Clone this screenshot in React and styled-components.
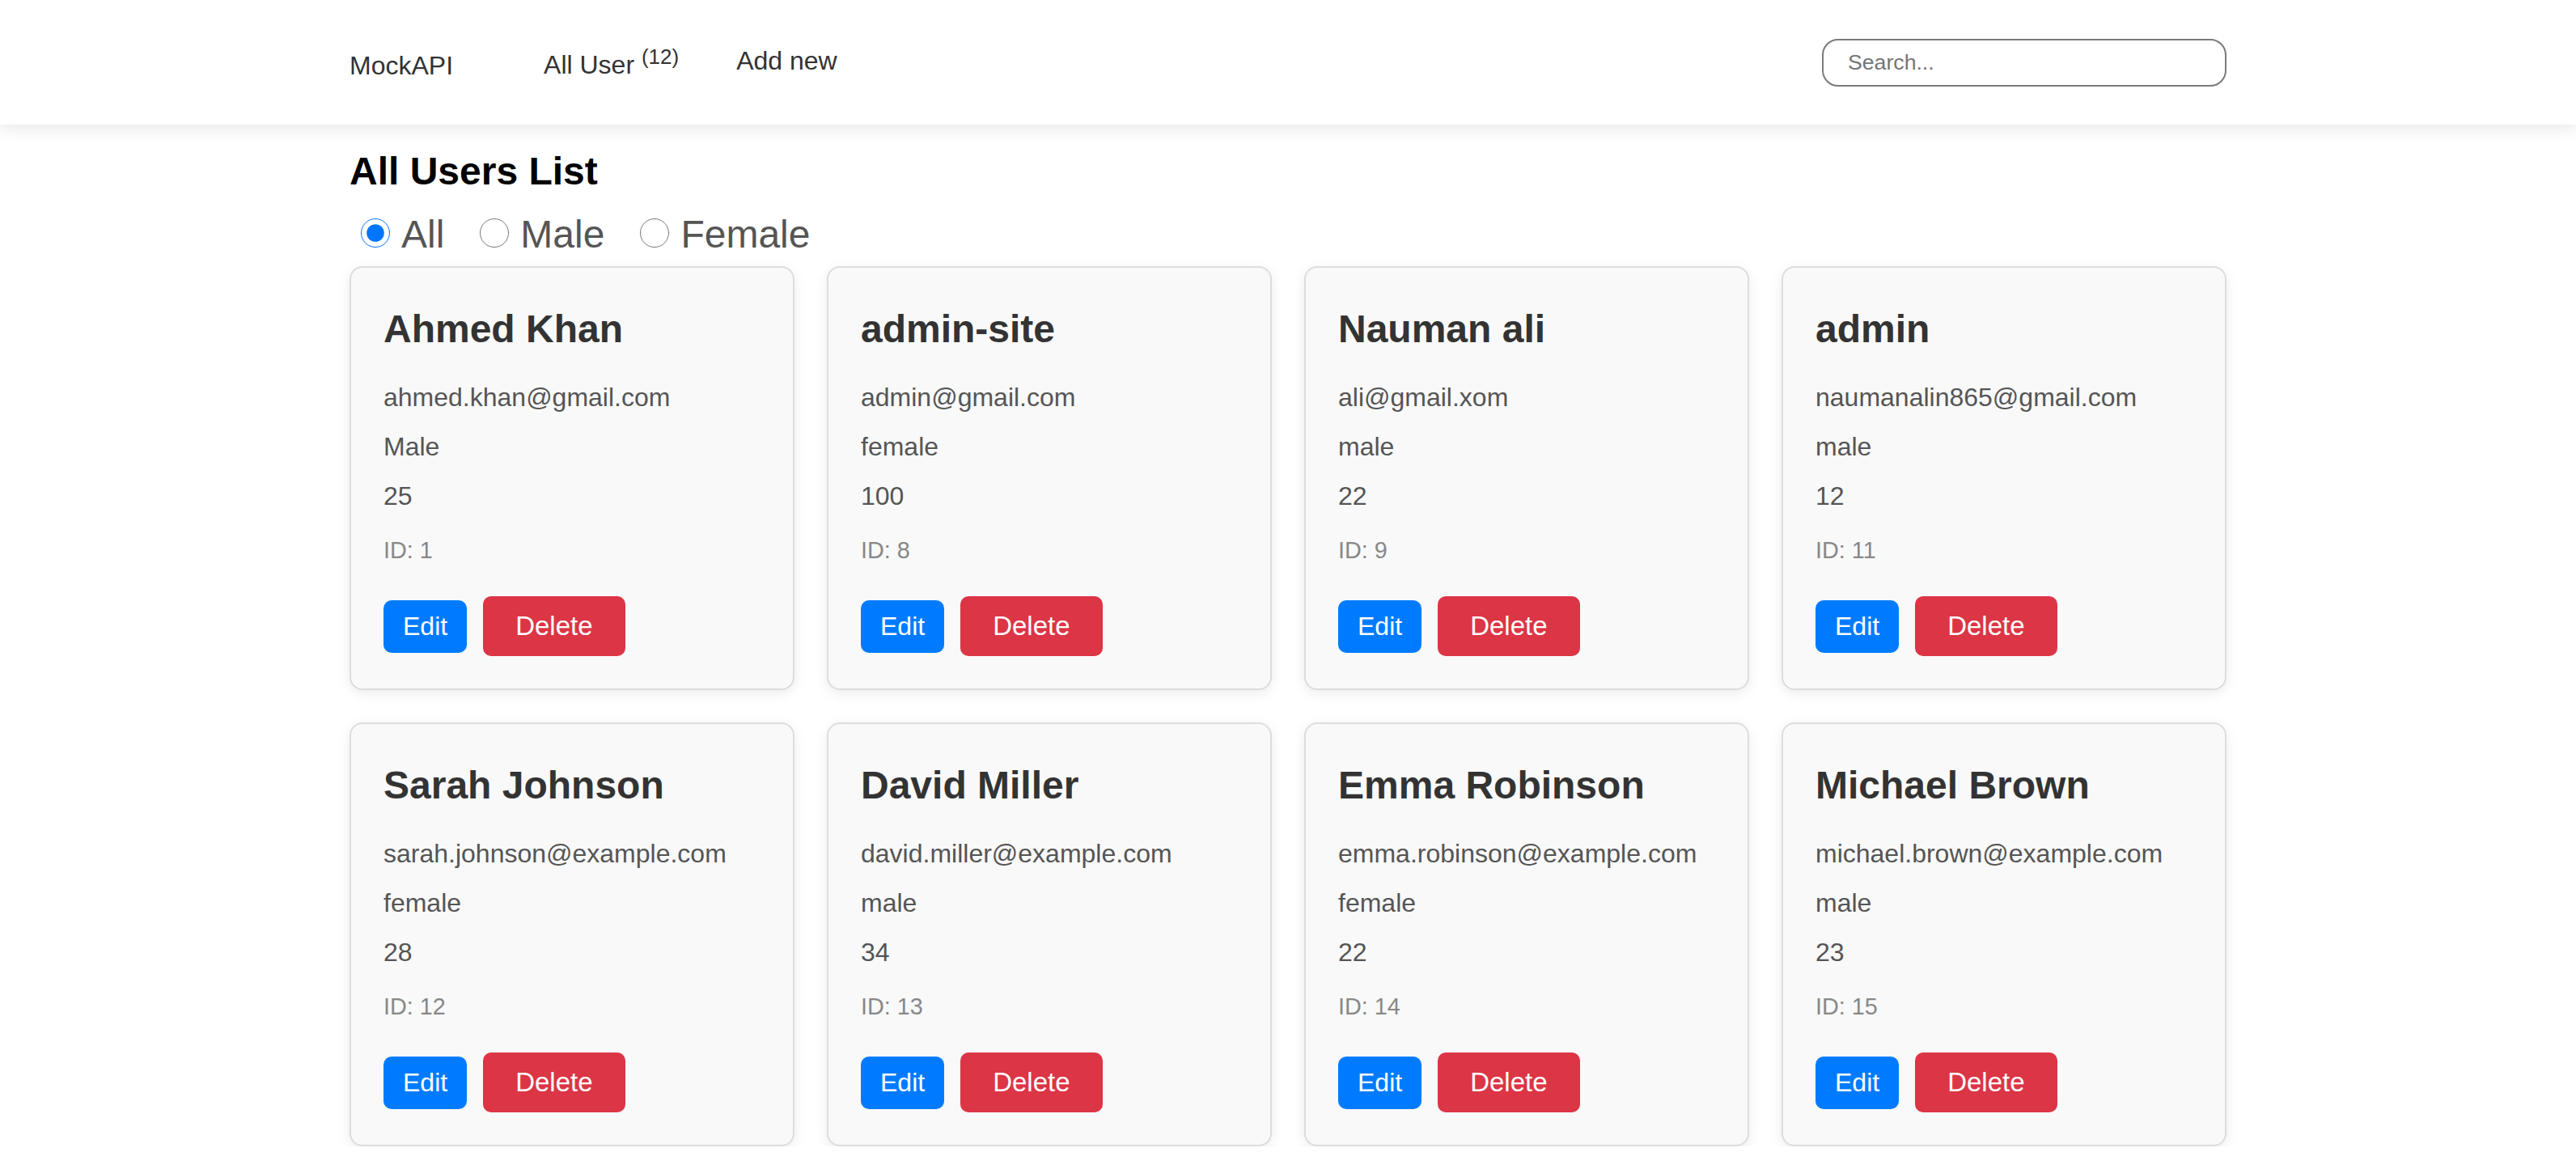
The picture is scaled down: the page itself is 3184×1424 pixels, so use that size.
import React from "react";
import styled, { createGlobalStyle } from "styled-components";

const GlobalStyle = createGlobalStyle`
  html, body {
    margin: 0;
    padding: 0;
    background: #ffffff;
    font-family: "Liberation Sans", Arial, Helvetica, sans-serif;
  }
  * { box-sizing: border-box; }
`;

const Header = styled.header`
  height: 154px;
  background: #ffffff;
  box-shadow: 0 4px 20px rgba(0, 0, 0, 0.1);
  display: flex;
  align-items: center;
`;

const Container = styled.div`
  width: 2320px;
  margin: 0 auto;
`;

const HeaderInner = styled(Container)`
  display: flex;
  align-items: center;
`;

const Logo = styled.a`
  font-size: 32px;
  color: #333333;
  text-decoration: none;
  margin-right: 112px;
  position: relative;
  top: 4px;
`;

const NavLinks = styled.nav`
  display: flex;
  align-items: center;
  gap: 71px;
`;

const NavLink = styled.a`
  font-size: 32px;
  color: #333333;
  text-decoration: none;
  position: relative;
  top: ${(p) => (p.$raised ? "-2px" : "0")};
  sup {
    font-size: 26px;
  }
`;

const Search = styled.input`
  margin-left: auto;
  width: 500px;
  height: 59px;
  border: 2px solid #7a7a7a;
  border-radius: 20px;
  padding: 0 30px;
  font-family: "Liberation Sans", Arial, sans-serif;
  font-size: 26.67px;
  color: #333;
  background: #fff;
  outline: none;
  &::placeholder {
    color: #757575;
  }
`;

const Title = styled.h2`
  margin: 30px 0 0;
  font-size: 48px;
  font-weight: bold;
  color: #000000;
  line-height: normal;
`;

const Filters = styled.div`
  display: flex;
  align-items: center;
  gap: 44px;
  margin-top: 23px;
  padding-left: 14px;
`;

const FilterLabel = styled.label`
  display: flex;
  align-items: center;
  gap: 14px;
  font-size: 48px;
  color: #555555;
  line-height: normal;
`;

const Radio = styled.input`
  width: 36px;
  height: 36px;
  margin: 0;
  position: relative;
  top: -2px;
`;

const Grid = styled.div`
  display: grid;
  grid-template-columns: repeat(4, 1fr);
  gap: 40px;
  margin-top: 12px;
`;

const Card = styled.div`
  background: #f9f9f9;
  border: 2px solid #dddddd;
  border-radius: 16px;
  padding: 40px;
  box-shadow: 0 4px 16px rgba(0, 0, 0, 0.08);
`;

const Name = styled.h3`
  margin: 8px 0 0;
  font-size: 48px;
  font-weight: bold;
  color: #333333;
  line-height: normal;
`;

const Info = styled.p`
  margin: ${(p) => (p.$first ? "39px" : "24px")} 0 0;
  font-size: 32px;
  color: #555555;
  line-height: normal;
`;

const Id = styled.p`
  margin: 32px 0 0;
  font-size: 28.8px;
  color: #888888;
  line-height: normal;
`;

const Actions = styled.div`
  display: flex;
  align-items: baseline;
  gap: 20px;
  margin-top: 40px;
`;

const Button = styled.button`
  border: none;
  color: #ffffff;
  font-family: "Liberation Sans", Arial, sans-serif;
  line-height: normal;
  border-radius: 10px;
  cursor: pointer;
  background: ${(p) => (p.$variant === "danger" ? "#dc3545" : "#007bff")};
  font-size: ${(p) => (p.$variant === "danger" ? "33px" : "32px")};
  padding: ${(p) => (p.$variant === "danger" ? "18px 40px" : "14px 24px")};
`;

const users = [
  { name: "Ahmed Khan", email: "ahmed.khan@gmail.com", gender: "Male", age: 25, id: 1 },
  { name: "admin-site", email: "admin@gmail.com", gender: "female", age: 100, id: 8 },
  { name: "Nauman ali", email: "ali@gmail.xom", gender: "male", age: 22, id: 9 },
  { name: "admin", email: "naumanalin865@gmail.com", gender: "male", age: 12, id: 11 },
  { name: "Sarah Johnson", email: "sarah.johnson@example.com", gender: "female", age: 28, id: 12 },
  { name: "David Miller", email: "david.miller@example.com", gender: "male", age: 34, id: 13 },
  { name: "Emma Robinson", email: "emma.robinson@example.com", gender: "female", age: 22, id: 14 },
  { name: "Michael Brown", email: "michael.brown@example.com", gender: "male", age: 23, id: 15 },
];

export default function App() {
  const [filter, setFilter] = React.useState("all");
  return (
    <>
      <GlobalStyle />
      <Header>
        <HeaderInner>
          <Logo href="#">MockAPI</Logo>
          <NavLinks>
            <NavLink href="#">
              All User <sup>(12)</sup>
            </NavLink>
            <NavLink href="#" $raised>
              Add new
            </NavLink>
          </NavLinks>
          <Search type="text" placeholder="Search..." />
        </HeaderInner>
      </Header>
      <Container>
        <Title>All Users List</Title>
        <Filters>
          {[
            ["all", "All"],
            ["male", "Male"],
            ["female", "Female"],
          ].map(([v, l]) => (
            <FilterLabel key={v}>
              <Radio
                type="radio"
                name="gender"
                checked={filter === v}
                onChange={() => setFilter(v)}
              />
              {l}
            </FilterLabel>
          ))}
        </Filters>
        <Grid>
          {users.map((u) => (
            <Card key={u.id}>
              <Name>{u.name}</Name>
              <Info $first>{u.email}</Info>
              <Info>{u.gender}</Info>
              <Info>{u.age}</Info>
              <Id>ID: {u.id}</Id>
              <Actions>
                <Button>Edit</Button>
                <Button $variant="danger">Delete</Button>
              </Actions>
            </Card>
          ))}
        </Grid>
      </Container>
    </>
  );
}
